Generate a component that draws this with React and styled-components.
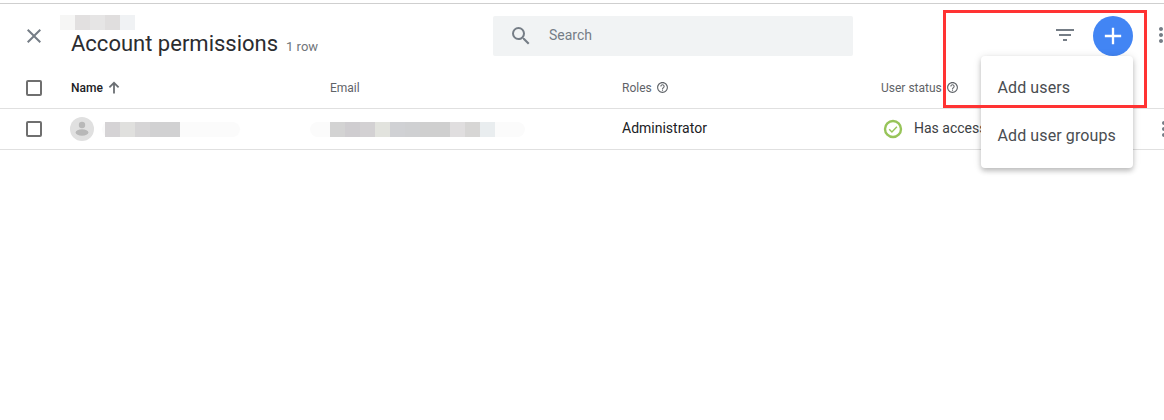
import React from 'react';
import styled, { createGlobalStyle } from 'styled-components';
import {
  MdClose,
  MdSearch,
  MdFilterList,
  MdAdd,
  MdMoreVert,
  MdHelpOutline,
} from 'react-icons/md';

const GlobalStyle = createGlobalStyle`
  html, body {
    margin: 0;
    padding: 0;
    background: #fff;
    overflow: hidden;
  }
  body {
    font-family: Roboto, "Liberation Sans", sans-serif;
  }
`;

const Page = styled.div`
  position: relative;
  width: 1164px;
  height: 420px;
  overflow: hidden;
  padding-top: 3px;
  box-sizing: border-box;
`;

const TopLine = styled.div`
  height: 1px;
  background: #cfcfcf;
`;

const Header = styled.header`
  display: flex;
  height: 52px;
  width: 1180px;
`;

const CloseButton = styled.div`
  width: 71px;
  flex: none;
  display: flex;
  justify-content: center;
  color: #757d86;
  padding-top: 20px;
  padding-right: 3px;
  box-sizing: border-box;
  font-size: 24px;
`;

const TitleBlock = styled.div`
  width: 422px;
  flex: none;
  display: flex;
  flex-direction: column;
`;

const Title = styled.div`
  display: flex;
  align-items: baseline;
  gap: 8px;
  margin-top: 1px;
  line-height: 26px;
`;

const TitleText = styled.h1`
  margin: 0;
  font-size: 22px;
  font-weight: 400;
  color: #2b2c30;
`;

const RowCount = styled.span`
  font-size: 13px;
  color: #70757a;
`;

const Redaction = styled.div`
  display: flex;
  height: 15px;
  margin-top: ${(p) => p.$top || 0}px;
  margin-left: ${(p) => p.$left || 0}px;
  padding-left: ${(p) => p.$pad || 0}px;
  width: ${(p) => p.$width}px;
  flex: none;
  box-sizing: border-box;
  background: ${(p) => p.$halo || 'transparent'};
  border-radius: 8px;
`;

const RedactionCell = styled.span`
  width: 15px;
  height: 15px;
  flex: none;
  background: ${(p) => p.$color};
`;

const SearchBox = styled.div`
  width: 360px;
  height: 40px;
  margin-top: 12px;
  flex: none;
  display: flex;
  align-items: center;
  background: #f1f3f4;
  border-radius: 2px;
  color: #757d86;
  font-size: 14px;
`;

const SearchIcon = styled.span`
  display: flex;
  font-size: 24px;
  margin-left: 16px;
  margin-right: 16px;
`;

const RaisedText = styled.span`
  padding-bottom: 2px;
`;

const Tools = styled.div`
  flex: 1;
  display: flex;
  align-items: flex-start;
  padding-top: 12px;
`;

const FilterIcon = styled.span`
  display: flex;
  font-size: 24px;
  color: #757d86;
  margin-left: 200px;
  margin-top: 7px;
`;

const AddButton = styled.div`
  width: 40px;
  height: 40px;
  border-radius: 50%;
  background: #4285f4;
  color: #fff;
  display: flex;
  align-items: center;
  justify-content: center;
  font-size: 28px;
  margin-left: 16px;
`;

const KebabIcon = styled.span`
  display: flex;
  font-size: 24px;
  color: #757d86;
  margin-left: 16px;
  margin-top: 7px;
`;

const Row = styled.div`
  display: grid;
  grid-template-columns: 71px 259px 292px 259px 1fr 24px;
  align-items: center;
  height: 40px;
  padding-top: ${(p) => p.$top || 0}px;
  border-bottom: 1px solid #e0e0e0;
  width: 1176px;
`;

const Checkbox = styled.span`
  display: block;
  width: 12px;
  height: 12px;
  border: 2px solid #6f6f6f;
  border-radius: 2px;
  margin-left: 26px;
`;

const ColumnLabel = styled.div`
  display: flex;
  align-items: center;
  gap: ${(p) => p.$gap}px;
  padding-bottom: 1px;
  font-size: 12px;
  color: ${(p) => (p.$active ? '#202124' : '#5f6368')};
  font-weight: ${(p) => (p.$active ? 500 : 400)};
`;

const HelpIcon = styled(MdHelpOutline)`
  font-size: 13px;
`;

const SortIcon = styled.svg`
  width: 16px;
  height: 16px;
  flex: none;
`;

const NameCell = styled.div`
  display: flex;
  align-items: center;
  gap: 8px;
  margin-left: -1px;
`;

const Avatar = styled.svg`
  width: 24px;
  height: 24px;
  flex: none;
`;

const CellText = styled.div`
  font-size: 14px;
  color: #202124;
  padding-bottom: 2px;
`;

const StatusCell = styled.div`
  display: flex;
  align-items: center;
  gap: 10px;
  font-size: 14px;
  color: #3c4043;
  padding-left: 1px;
`;

const StatusIcon = styled.svg`
  width: 22px;
  height: 22px;
  flex: none;
`;

const RowKebab = styled.span`
  display: flex;
  font-size: 24px;
  color: #757d86;
`;

const Menu = styled.div`
  position: absolute;
  left: 981px;
  top: 56px;
  width: 152px;
  padding: 8px 0;
  box-sizing: border-box;
  background: #fff;
  border-radius: 4px;
  box-shadow: 0 3px 5px rgba(0, 0, 0, 0.2), 0 1px 8px rgba(0, 0, 0, 0.12);
`;

const MenuItem = styled.div`
  height: 48px;
  box-sizing: border-box;
  display: flex;
  align-items: center;
  padding: 0 0 2px 16.5px;
  font-size: 16px;
  letter-spacing: 0.1px;
  color: #4a4d51;
`;

const Highlight = styled.div`
  position: absolute;
  left: 943px;
  top: 10px;
  width: 198px;
  height: 92px;
  border: 3px solid #ff3333;
  pointer-events: none;
`;

const topBlur = ['#f6f6f5', '#e2e0e0', '#e6e5e5', '#e0dede', '#f0f2f4'];
const nameBlur = ['#d5d3d5', '#e0e0de', '#d6d5d6', '#d1d1d2', '#d1d1d2'];
const emailBlur = ['#d3d3d3', '#cfcdd0', '#d3d1d3', '#e2e3de', '#d0d1d4', '#cfd0d2', '#cfcfcf', '#cfcfcf', '#e0dedf', '#d7d6d5', '#e9edef'];

const blur = (colors) => colors.map((c, i) => <RedactionCell key={i} $color={c} />);

export default function App() {
  return (
    <Page>
      <GlobalStyle />
      <TopLine />
      <Header>
        <CloseButton>
          <MdClose />
        </CloseButton>
        <TitleBlock>
          <Redaction $top={11} $left={-11} $width={75}>
            {blur(topBlur)}
          </Redaction>
          <Title>
            <TitleText>Account permissions</TitleText>
            <RowCount>1 row</RowCount>
          </Title>
        </TitleBlock>
        <SearchBox>
          <SearchIcon>
            <MdSearch />
          </SearchIcon>
          <RaisedText>Search</RaisedText>
        </SearchBox>
        <Tools>
          <FilterIcon>
            <MdFilterList />
          </FilterIcon>
          <AddButton>
            <MdAdd />
          </AddButton>
          <KebabIcon>
            <MdMoreVert />
          </KebabIcon>
        </Tools>
      </Header>
      <Row $top={12}>
        <Checkbox />
        <ColumnLabel $active $gap={3}>
          Name
          <SortIcon viewBox="0 0 16 16" fill="none" stroke="#6b6f73" strokeWidth="1.8">
            <path d="M8 13.5V3M3.4 7.4L8 2.8l4.6 4.6" />
          </SortIcon>
        </ColumnLabel>
        <ColumnLabel>Email</ColumnLabel>
        <ColumnLabel $gap={4}>
          Roles
          <HelpIcon />
        </ColumnLabel>
        <ColumnLabel $gap={4}>
          User status
          <HelpIcon />
        </ColumnLabel>
        <span />
      </Row>
      <Row>
        <Checkbox />
        <NameCell>
          <Avatar viewBox="0 0 24 24">
            <circle cx="12" cy="12" r="12" fill="#e0e0e0" />
            <circle cx="12" cy="8" r="3.2" fill="#b8b8b8" />
            <ellipse cx="12" cy="15.5" rx="6.4" ry="3.3" fill="#b8b8b8" />
          </Avatar>
          <Redaction $width={138} $halo="#fbfbfb" $pad={3}>
            {blur(nameBlur)}
          </Redaction>
        </NameCell>
        <Redaction $width={215} $left={-20} $halo="#fbfbfb" $pad={20}>
          {blur(emailBlur)}
        </Redaction>
        <CellText>Administrator</CellText>
        <StatusCell>
          <StatusIcon viewBox="0 0 22 22" fill="none" stroke="#97c459">
            <circle cx="11" cy="11" r="8" strokeWidth="2.4" />
            <path d="M7.2 11.2l2.7 2.7 5-5.2" strokeWidth="1.4" />
          </StatusIcon>
          <RaisedText>Has access</RaisedText>
        </StatusCell>
        <RowKebab>
          <MdMoreVert />
        </RowKebab>
      </Row>
      <Menu>
        <MenuItem>Add users</MenuItem>
        <MenuItem>Add user groups</MenuItem>
      </Menu>
      <Highlight />
    </Page>
  );
}
